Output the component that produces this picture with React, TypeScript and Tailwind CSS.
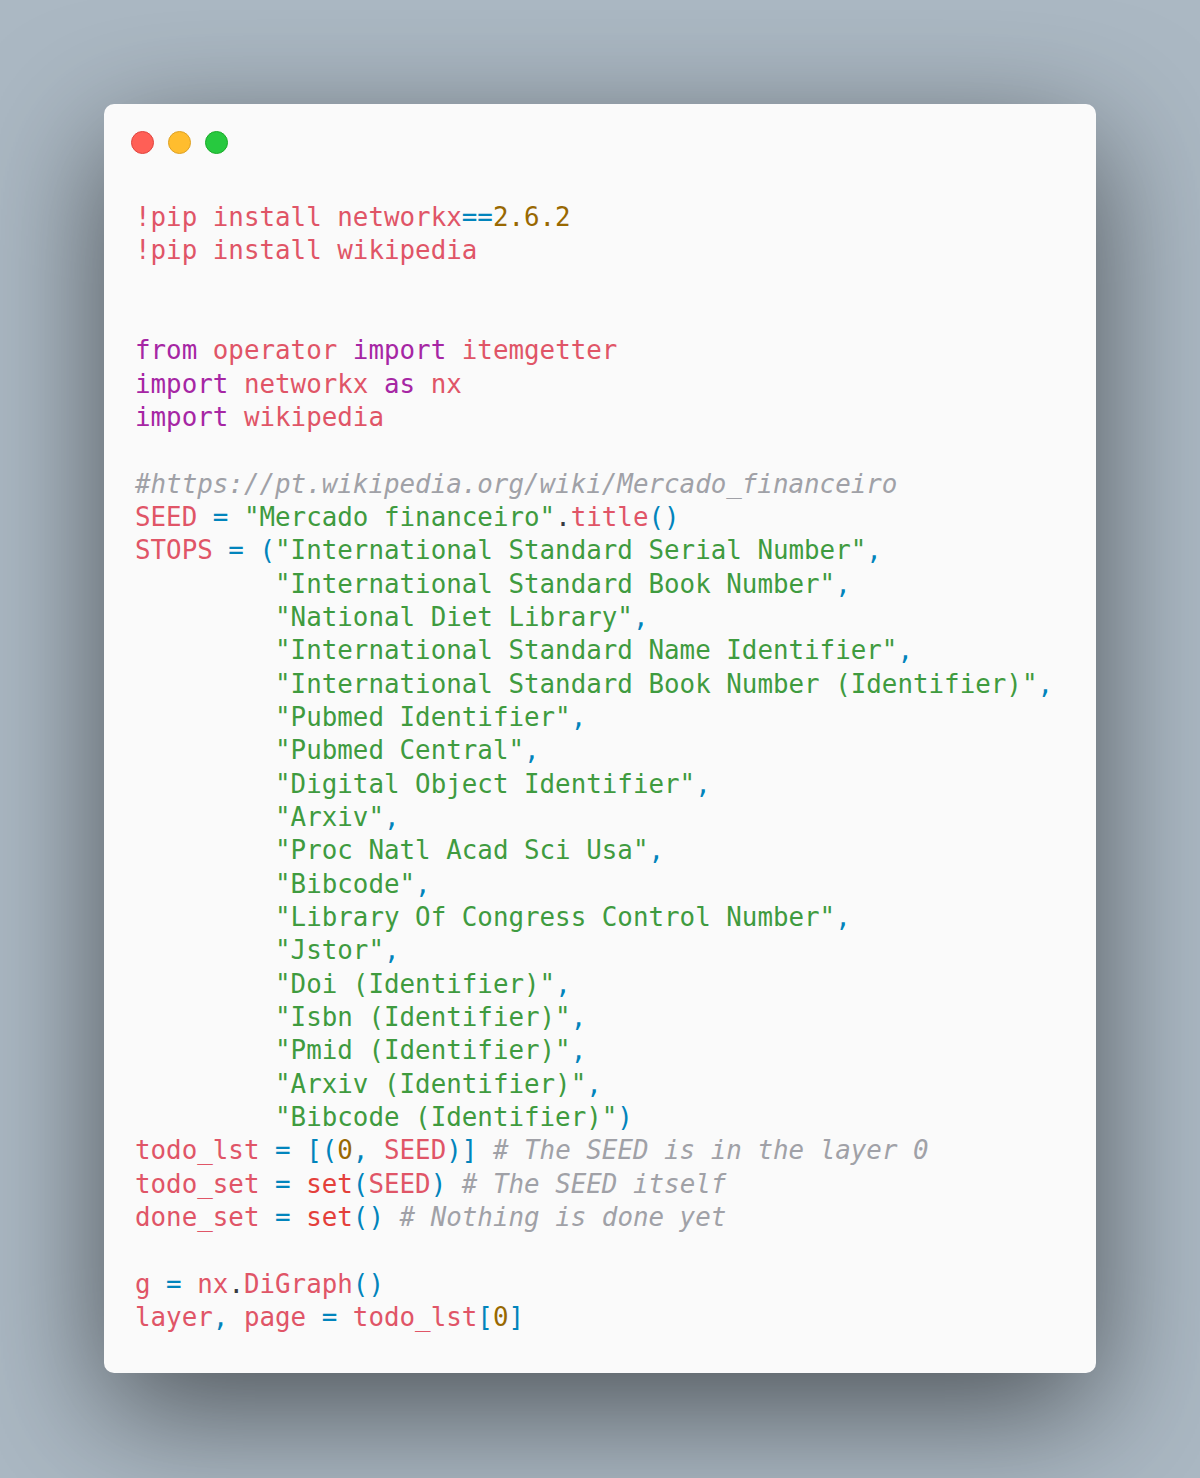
import React from "react";

type Tok = [string, string];

const C: Record<string, string> = {
  v: "text-[#e05567]",
  k: "text-[#a626a4]",
  s: "text-[#3f9b3f]",
  p: "text-[#0184bc]",
  n: "text-[#986801]",
  c: "text-[#a0a1a7] italic",
  b: "text-[#e4403a]",
  d: "text-[#383a42]",
  t: "",
};

const IND = "         ";
const stops = [
  "International Standard Book Number",
  "National Diet Library",
  "International Standard Name Identifier",
  "International Standard Book Number (Identifier)",
  "Pubmed Identifier",
  "Pubmed Central",
  "Digital Object Identifier",
  "Arxiv",
  "Proc Natl Acad Sci Usa",
  "Bibcode",
  "Library Of Congress Control Number",
  "Jstor",
  "Doi (Identifier)",
  "Isbn (Identifier)",
  "Pmid (Identifier)",
  "Arxiv (Identifier)",
  "Bibcode (Identifier)",
];

const lines: Tok[][] = [
  [["v", "!pip install networkx"], ["p", "=="], ["n", "2.6.2"]],
  [["v", "!pip install wikipedia"]],
  [],
  [],
  [["k", "from"], ["t", " "], ["v", "operator"], ["t", " "], ["k", "import"], ["t", " "], ["v", "itemgetter"]],
  [["k", "import"], ["t", " "], ["v", "networkx"], ["t", " "], ["k", "as"], ["t", " "], ["v", "nx"]],
  [["k", "import"], ["t", " "], ["v", "wikipedia"]],
  [],
  [["c", "#https://pt.wikipedia.org/wiki/Mercado_financeiro"]],
  [["v", "SEED"], ["t", " "], ["p", "="], ["t", " "], ["s", '"Mercado financeiro"'], ["d", "."], ["v", "title"], ["p", "()"]],
  [["v", "STOPS"], ["t", " "], ["p", "="], ["t", " "], ["p", "("], ["s", '"International Standard Serial Number"'], ["p", ","]],
  ...stops.map((s, i): Tok[] => [
    ["t", IND],
    ["s", `"${s}"`],
    ["p", i === stops.length - 1 ? ")" : ","],
  ]),
  [["v", "todo_lst"], ["p", " = [("], ["n", "0"], ["p", ", "], ["v", "SEED"], ["p", ")]"], ["t", " "], ["c", "# The SEED is in the layer 0"]],
  [["v", "todo_set"], ["p", " = "], ["b", "set"], ["p", "("], ["v", "SEED"], ["p", ")"], ["t", " "], ["c", "# The SEED itself"]],
  [["v", "done_set"], ["p", " = "], ["b", "set"], ["p", "()"], ["t", " "], ["c", "# Nothing is done yet"]],
  [],
  [["v", "g"], ["p", " = "], ["v", "nx"], ["d", "."], ["v", "DiGraph"], ["p", "()"]],
  [["v", "layer"], ["p", ","], ["t", " "], ["v", "page"], ["p", " = "], ["v", "todo_lst"], ["p", "["], ["n", "0"], ["p", "]"]],
];

export default function App() {
  return (
    <div className="w-[1200px] h-[1478px] bg-[#abb8c3] pt-[104px] pl-[104px] overflow-hidden">
      <div className="w-[992px] h-[1269px] bg-[#fafafa] rounded-[10px] shadow-[0_37px_126px_rgba(0,0,0,0.55)] pt-[27px] pl-[27px] pb-[40px]">
        <div className="flex gap-[14px]">
          <div className="w-[23px] h-[23px] rounded-full bg-[#ff5f56] border border-[#e0443e]" />
          <div className="w-[23px] h-[23px] rounded-full bg-[#ffbd2e] border border-[#dea123]" />
          <div className="w-[23px] h-[23px] rounded-full bg-[#27c93f] border border-[#1aab29]" />
        </div>
        <div
          className="mt-[47px] pl-[4px] text-[25.85px] leading-[33.33px] whitespace-pre text-[#383a42]"
          style={{ fontFamily: '"DejaVu Sans Mono", "Liberation Mono", monospace' }}
        >
          {lines.map((ln, i) => (
            <div key={i} className="h-[33.33px]">
              {ln.length === 0 ? " " : ln.map(([c, t], j) => (
                <span key={j} className={C[c]}>
                  {t}
                </span>
              ))}
            </div>
          ))}
        </div>
      </div>
    </div>
  );
}
